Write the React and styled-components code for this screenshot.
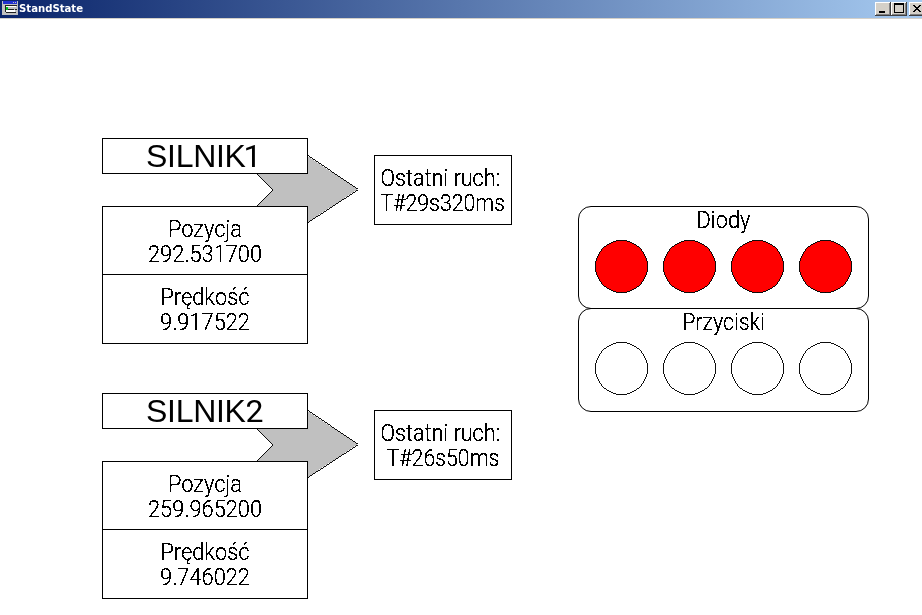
import React from 'react';
import styled, { createGlobalStyle } from 'styled-components';

const GlobalStyle = createGlobalStyle`
  *, *::before, *::after { box-sizing: border-box; }
  html, body { margin: 0; background: #fff; overflow: hidden; }
`;

const Window = styled.div`
  width: 922px;
  height: 615px;
  overflow: hidden;
  background: #fff;
  color: #000;
  font-family: 'Liberation Sans', Arial, sans-serif;
`;

const FilterDefs = styled.svg`
  position: absolute;
  width: 0;
  height: 0;
`;

const TitleBar = styled.header`
  display: flex;
  align-items: center;
  width: 925px;
  height: 19px;
  padding-left: 2px;
  border-bottom: 1px solid #d4d0c8;
  background: linear-gradient(90deg, #0a246a, #a6caf0);
`;

const AppIcon = styled.svg`
  width: 16px;
  height: 16px;
  flex: none;
  shape-rendering: crispEdges;
`;

const Title = styled.span`
  flex: 1;
  margin-left: 1px;
  color: #fff;
  font: bold 11px/16px 'DejaVu Sans', Tahoma, sans-serif;
  transform: scaleX(0.92);
  transform-origin: left;
`;

const Caption = styled.button`
  display: block;
  width: 16px;
  height: 14px;
  padding: 0;
  margin-left: ${(p) => (p.$gap ? 2 : 0)}px;
  border: 0;
  background: #d4d0c8;
  box-shadow: inset -1px -1px #404040, inset 1px 1px #fff, inset -2px -2px #808080;

  svg { display: block; shape-rendering: crispEdges; }
`;

const Canvas = styled.main`
  display: flex;
  align-items: flex-start;
  height: 596px;
  padding-left: 102px;
`;

const Motors = styled.div`
  display: grid;
  gap: 49px;
  padding-top: 119px;
`;

const Motor = styled.section`
  display: flex;
  align-items: flex-start;
  position: relative;
`;

const Arrow = styled.svg`
  position: absolute;
  left: 150px;
  top: 14px;
  shape-rendering: crispEdges;
`;

const MotorColumn = styled.div`
  position: relative;
  width: 206px;
`;

const Name = styled.h1`
  height: 36px;
  margin: 0 0 32px;
  padding-left: 43px;
  border: 1px solid #000;
  background: #fff;
  font-size: 32px;
  font-weight: 400;
  line-height: 35px;
  letter-spacing: -0.3px;
  filter: url(#hard-edges);
`;

const NameDigit = styled.span`
  margin-left: ${(p) => (p.$narrow ? -2 : 0)}px;
  font-family: Roboto, sans-serif;
`;

const Reading = styled.div`
  height: 69px;
  padding-top: 9px;
  border: 1px solid #000;
  background: #fff;

  & + & { height: 70px; margin-top: -1px; }
`;

const Line = styled.div`
  height: 25px;
  font-family: Roboto, 'Liberation Sans', sans-serif;
  font-size: 24.5px;
  font-weight: 300;
  line-height: 25px;
  text-align: center;
  white-space: pre;
  transform: scaleX(${(p) => p.$squeeze ?? 0.89});
  filter: url(#hard-edges);
`;

const LastMove = styled.div`
  display: flex;
  flex-direction: column;
  align-items: center;
  width: 138px;
  height: 70px;
  margin: 17px 0 0 66px;
  padding-top: 9px;
  border: 1px solid #000;
`;

const Io = styled.div`
  padding: 187px 0 0 66px;
`;

const Panel = styled.section`
  width: 291px;
  height: 103px;
  border: 1px solid #000;
  border-radius: 13px;

  & + & { height: 104px; margin-top: -1px; }
`;

const Lamps = styled.div`
  display: flex;
  gap: 15px;
  padding: 8px 0 0 16px;
`;

const Lamp = styled.svg`
  width: 53px;
  height: 53px;
  fill: ${(p) => (p.$on ? '#f00' : '#fff')};
  stroke: #000;
  stroke-width: 0.95;
  shape-rendering: crispEdges;
`;

const MOTORS = [
  { name: 'SILNIK', number: 1, position: '292.531700', speed: '9.917522', move: 'T#29s320ms' },
  { name: 'SILNIK', number: 2, position: '259.965200', speed: '9.746022', move: 'T#26s50ms' },
];

function LampPanel({ title, squeeze, states }) {
  return (
    <Panel>
      <Line $squeeze={squeeze}>{title}</Line>
      <Lamps>
        {states.map((on, i) => (
          <Lamp key={i} $on={on} viewBox="0 0 53 53">
            <circle cx="26.5" cy="26.5" r="26" />
          </Lamp>
        ))}
      </Lamps>
    </Panel>
  );
}

function MotorView({ name, number, position, speed, move }) {
  return (
    <Motor>
      <Arrow width="108" height="74" viewBox="0 0 108 74">
        <path d="M0.5 17.5H50.5V0.5L105.5 37.5L50.5 73.5V57.5H0.5L20.5 37.5Z" fill="#c0c0c0" stroke="#000" strokeWidth="0.95" />
      </Arrow>
      <MotorColumn>
        <Name>{name}<NameDigit $narrow={number === 1}>{number}</NameDigit></Name>
        <Reading>
          <Line>Pozycja</Line>
          <Line>{position}</Line>
        </Reading>
        <Reading>
          <Line>Prędkość</Line>
          <Line>{speed}</Line>
        </Reading>
      </MotorColumn>
      <LastMove>
        <Line $squeeze={0.88}>Ostatni ruch: </Line>
        <Line $squeeze={0.87}>{move}</Line>
      </LastMove>
    </Motor>
  );
}

export default function App() {
  return (
    <Window>
      <GlobalStyle />
      <FilterDefs>
        <filter id="hard-edges" colorInterpolationFilters="sRGB">
          <feComponentTransfer>
            <feFuncA type="discrete" tableValues="0 1 1" />
          </feComponentTransfer>
        </filter>
      </FilterDefs>
      <TitleBar>
        <AppIcon viewBox="0 0 16 16">
          <path d="M0 0h16v14H0z" fill="#c0c0c0" />
          <path d="M1 0h14v3H1z" fill="#2030d0" />
          <path d="M11 1h1v1h-1zM13 1h1v1h-1z" fill="#c0c0c0" />
          <path d="M3 4h12v1H3zM3 5h1v6H3zM4 11h10v1H4zM13 8h2v1h-2zM6 8h6v1H6z" fill="#202020" />
          <path d="M4 5h10v1H4zM4 9h9v2H4z" fill="#fff" />
          <path d="M4 6h2v3H4z" fill="#00c020" />
        </AppIcon>
        <Title>StandState</Title>
        <Caption aria-label="Minimize"><svg width="16" height="14"><path d="M4 9h6v2H4z" /></svg></Caption>
        <Caption aria-label="Maximize"><svg width="16" height="14"><path d="M3 1h10v10H3zM4 3v7h8V3z" fillRule="evenodd" /></svg></Caption>
        <Caption aria-label="Close" $gap><svg width="16" height="14"><path d="M4 3h2v1h1v1h2V4h1V3h2v1h-1v1h-1v1H9v1h1v1h1v1h1v1h-2V9H9V8H7v1H6v1H4V9h1V8h1V7h1V6H6V5H5V4H4z" /></svg></Caption>
      </TitleBar>
      <Canvas>
        <Motors>
          {MOTORS.map((m) => <MotorView key={m.number} {...m} />)}
        </Motors>
        <Io>
          <LampPanel title="Diody" squeeze={0.89} states={[true, true, true, true]} />
          <LampPanel title="Przyciski" squeeze={0.87} states={[false, false, false, false]} />
        </Io>
      </Canvas>
    </Window>
  );
}
